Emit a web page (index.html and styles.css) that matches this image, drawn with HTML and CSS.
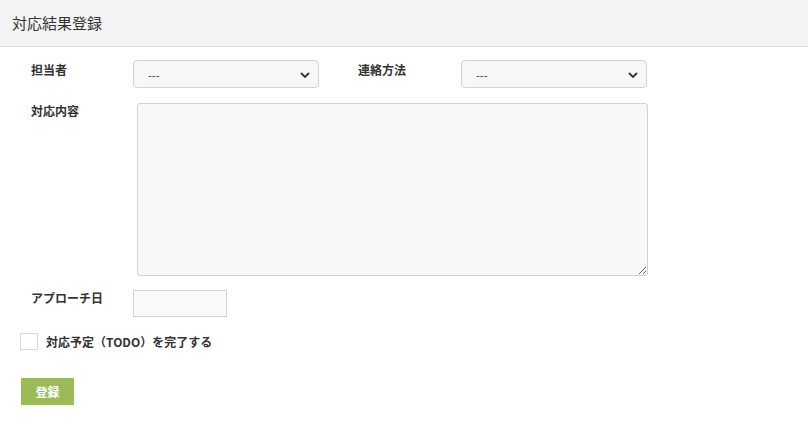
FILE: index.html
```html
<!DOCTYPE html>
<html lang="ja">
<head>
    <meta charset="UTF-8">
    <meta name="viewport" content="width=device-width, initial-scale=1.0">
    <title>対応結果登録</title>
    <link rel="stylesheet" href="styles.css">
</head>
<body>
    <!-- Header -->
    <div class="page-header">
        <h1>対応結果登録</h1>
    </div>

    <!-- Form -->
    <form class="result-form">
        <div class="form-row">
            <label class="field-label">担当者</label>
            <div class="select-wrap">
                <select>
                    <option>---</option>
                </select>
                <svg class="chevron" width="10" height="6" viewBox="0 0 10 6"><path d="M1 1l4 4 4-4" fill="none" stroke="#333" stroke-width="1.8"/></svg>
            </div>
            <label class="field-label second">連絡方法</label>
            <div class="select-wrap">
                <select>
                    <option>---</option>
                </select>
                <svg class="chevron" width="10" height="6" viewBox="0 0 10 6"><path d="M1 1l4 4 4-4" fill="none" stroke="#333" stroke-width="1.8"/></svg>
            </div>
        </div>

        <div class="form-row content-row">
            <label class="field-label">対応内容</label>
            <textarea class="content-text"></textarea>
        </div>

        <div class="form-row date-row">
            <label class="field-label">アプローチ日</label>
            <input type="text" class="date-input">
        </div>

        <label class="todo-check">
            <span class="check-box"></span>
            <span>対応予定（TODO）を完了する</span>
        </label>

        <button type="button" class="submit-btn">登録</button>
    </form>
</body>
</html>
```

FILE: styles.css
```css
/* Reset */
* {
    margin: 0;
    padding: 0;
    box-sizing: border-box;
    font-family: "Noto Sans CJK JP", "Noto Sans", sans-serif;
}

body {
    background-color: #fff;
    color: #333;
}

/* Header */
.page-header {
    height: 47px;
    background-color: #f3f3f3;
    border-bottom: 1px solid #d6d6d6;
    display: flex;
    align-items: center;
    padding-left: 12px;
}

.page-header h1 {
    font-size: 15px;
    font-weight: normal;
    color: #333;
    line-height: 1;
    margin-top: -2px;
}

/* Form */
.result-form {
    padding: 13px 0 0 20px;
}

.form-row {
    display: flex;
    align-items: flex-start;
    padding-left: 11px;
}

.field-label {
    width: 102px;
    font-size: 12px;
    font-weight: bold;
    line-height: 16px;
    padding-top: 2px;
    color: #333;
}

.field-label.second {
    width: 103px;
    margin-left: 39px;
}

.select-wrap {
    position: relative;
    width: 186px;
    height: 28px;
}

.select-wrap select {
    appearance: none;
    -webkit-appearance: none;
    width: 100%;
    height: 100%;
    padding: 2px 30px 0 14px;
    font-size: 11px;
    color: #333;
    background-color: #f7f7f7;
    border: 1px solid #d2d2d2;
    border-radius: 4px;
}

.chevron {
    position: absolute;
    right: 9px;
    top: 12px;
    pointer-events: none;
}

.content-row {
    margin-top: 15px;
}

.content-row .field-label {
    padding-top: 0;
}

.content-text {
    display: block;
    width: 511px;
    height: 173px;
    margin-left: 4px;
    background-color: #f8f8f8;
    border: 1px solid #d2d2d2;
    border-radius: 3px;
}

.date-row {
    margin-top: 14px;
}

.date-row .field-label {
    padding-top: 0;
}

.date-input {
    display: block;
    width: 94px;
    height: 27px;
    background-color: #f9f9f9;
    border: 1px solid #d2d2d2;
}

/* Checkbox */
.todo-check {
    display: flex;
    align-items: center;
    margin-top: 16px;
    font-size: 12px;
    font-weight: bold;
    line-height: 17px;
}

.check-box {
    width: 18px;
    height: 17px;
    border: 1px solid #d8d8d8;
    background-color: #fff;
    margin-right: 8px;
}

/* Button */
.submit-btn {
    display: block;
    margin: 28px 0 0 1px;
    width: 53px;
    height: 27px;
    background-color: #9bbb59;
    border: none;
    color: #fff;
    font-size: 12px;
    font-weight: bold;
    cursor: pointer;
}
```
